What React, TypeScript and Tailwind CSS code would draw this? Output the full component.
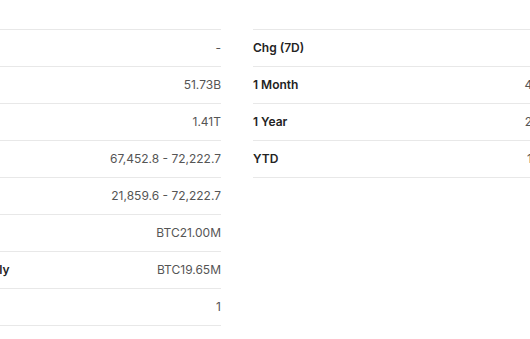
type Row = { label: string; value: string };

const left: Row[] = [
  { label: 'Prev. Close', value: '-' },
  { label: 'Volume', value: '51.73B' },
  { label: 'Market Cap', value: '1.41T' },
  { label: "Day's Range", value: '67,452.8 - 72,222.7' },
  { label: '52 wk Range', value: '21,859.6 - 72,222.7' },
  { label: 'Max Supply', value: 'BTC21.00M' },
  { label: 'Circulating Supply', value: 'BTC19.65M' },
  { label: 'Rank', value: '1' },
];

const right: Row[] = [
  { label: 'Chg (7D)', value: '' },
  { label: '1 Month', value: '46.52%' },
  { label: '1 Year', value: '25.93%' },
  { label: 'YTD', value: '18.08%' },
];

function StatTable({ rows, width }: { rows: Row[]; width: string }) {
  return (
    <div className={`${width} shrink-0 border-b border-[#e8e8e8]`}>
      {rows.map((r) => (
        <div
          key={r.label}
          className="h-[37px] flex items-center justify-between border-t border-[#e8e8e8] text-[12px]"
        >
          <span className="font-semibold text-[#232323] whitespace-nowrap">{r.label}</span>
          <span className="text-[#555] whitespace-nowrap">{r.value}</span>
        </div>
      ))}
    </div>
  );
}

export default function App() {
  return (
    <div
      className="w-[530px] h-[339px] overflow-hidden bg-white"
      style={{ fontFamily: 'Inter, "Liberation Sans", sans-serif' }}
    >
      <div className="flex items-start gap-8 pt-[29px] ml-[-97px]">
        <StatTable rows={left} width="w-[318px]" />
        <StatTable rows={right} width="w-[316px]" />
      </div>
    </div>
  );
}
